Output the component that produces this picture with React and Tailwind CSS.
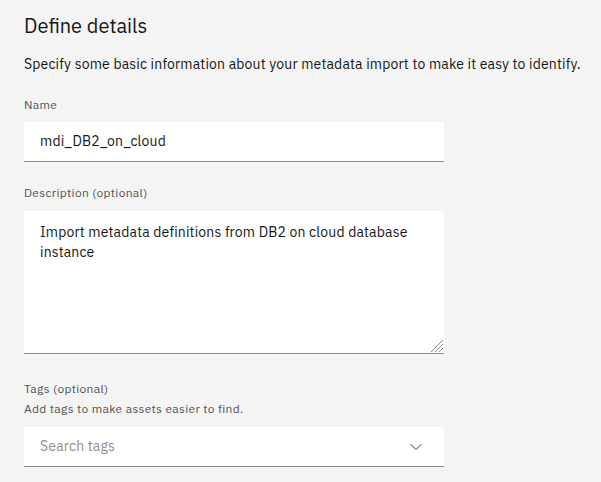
import { ChevronDown } from "lucide-react";

const font = { fontFamily: '"IBM Plex Sans", Roboto, "Liberation Sans", sans-serif' };

function Label({ children, className = "" }) {
  return (
    <div className={`text-[12px] leading-[16px] tracking-[0.32px] text-[#525252] ${className}`}>{children}</div>
  );
}

export default function App() {
  return (
    <div className="min-h-screen w-[601px] h-[482px] overflow-hidden bg-[#f4f4f4] px-6" style={font}>
      <h1 className="pt-[12px] text-[20px] leading-[28px] text-[#161616]">Define details</h1>
      <p className="mt-[14px] text-[14px] leading-[20px] tracking-[0.16px] text-[#161616] whitespace-nowrap">
        Specify some basic information about your metadata import to make it easy to identify.
      </p>

      {/* Name */}
      <Label className="mt-[23px]">Name</Label>
      <div className="mt-[9px] w-[420px] h-[40px] bg-white border-b border-[#8d8d8d] px-4 flex items-center text-[14px] tracking-[0.16px] text-[#161616]">
        mdi_DB2_on_cloud
      </div>

      {/* Description */}
      <Label className="mt-[23px]">Description (optional)</Label>
      <div className="relative mt-[10px] w-[420px] h-[143px] bg-white border-b border-[#8d8d8d] px-4 pt-[11px] text-[14px] leading-[20px] tracking-[0.16px] text-[#161616]">
        <div className="w-[380px]">Import metadata definitions from DB2 on cloud database instance</div>
        <svg className="absolute right-0 bottom-0" width="14" height="14" viewBox="0 0 14 14">
          <line x1="13" y1="1" x2="1" y2="13" stroke="#8d8d8d" strokeWidth="1" />
          <line x1="13" y1="5" x2="5" y2="13" stroke="#8d8d8d" strokeWidth="1" />
          <line x1="13" y1="9" x2="9" y2="13" stroke="#8d8d8d" strokeWidth="1" />
        </svg>
      </div>

      {/* Tags */}
      <Label className="mt-[27px]">Tags (optional)</Label>
      <Label className="mt-[4px]">Add tags to make assets easier to find.</Label>
      <div className="mt-[10px] w-[420px] h-[40px] bg-white border-b border-[#8d8d8d] pl-4 pr-[18px] flex items-center justify-between text-[14px] tracking-[0.16px]">
        <span className="text-[#8d8d8d]">Search tags</span>
        <ChevronDown size={20} strokeWidth={1} className="text-[#161616]" />
      </div>
    </div>
  );
}
